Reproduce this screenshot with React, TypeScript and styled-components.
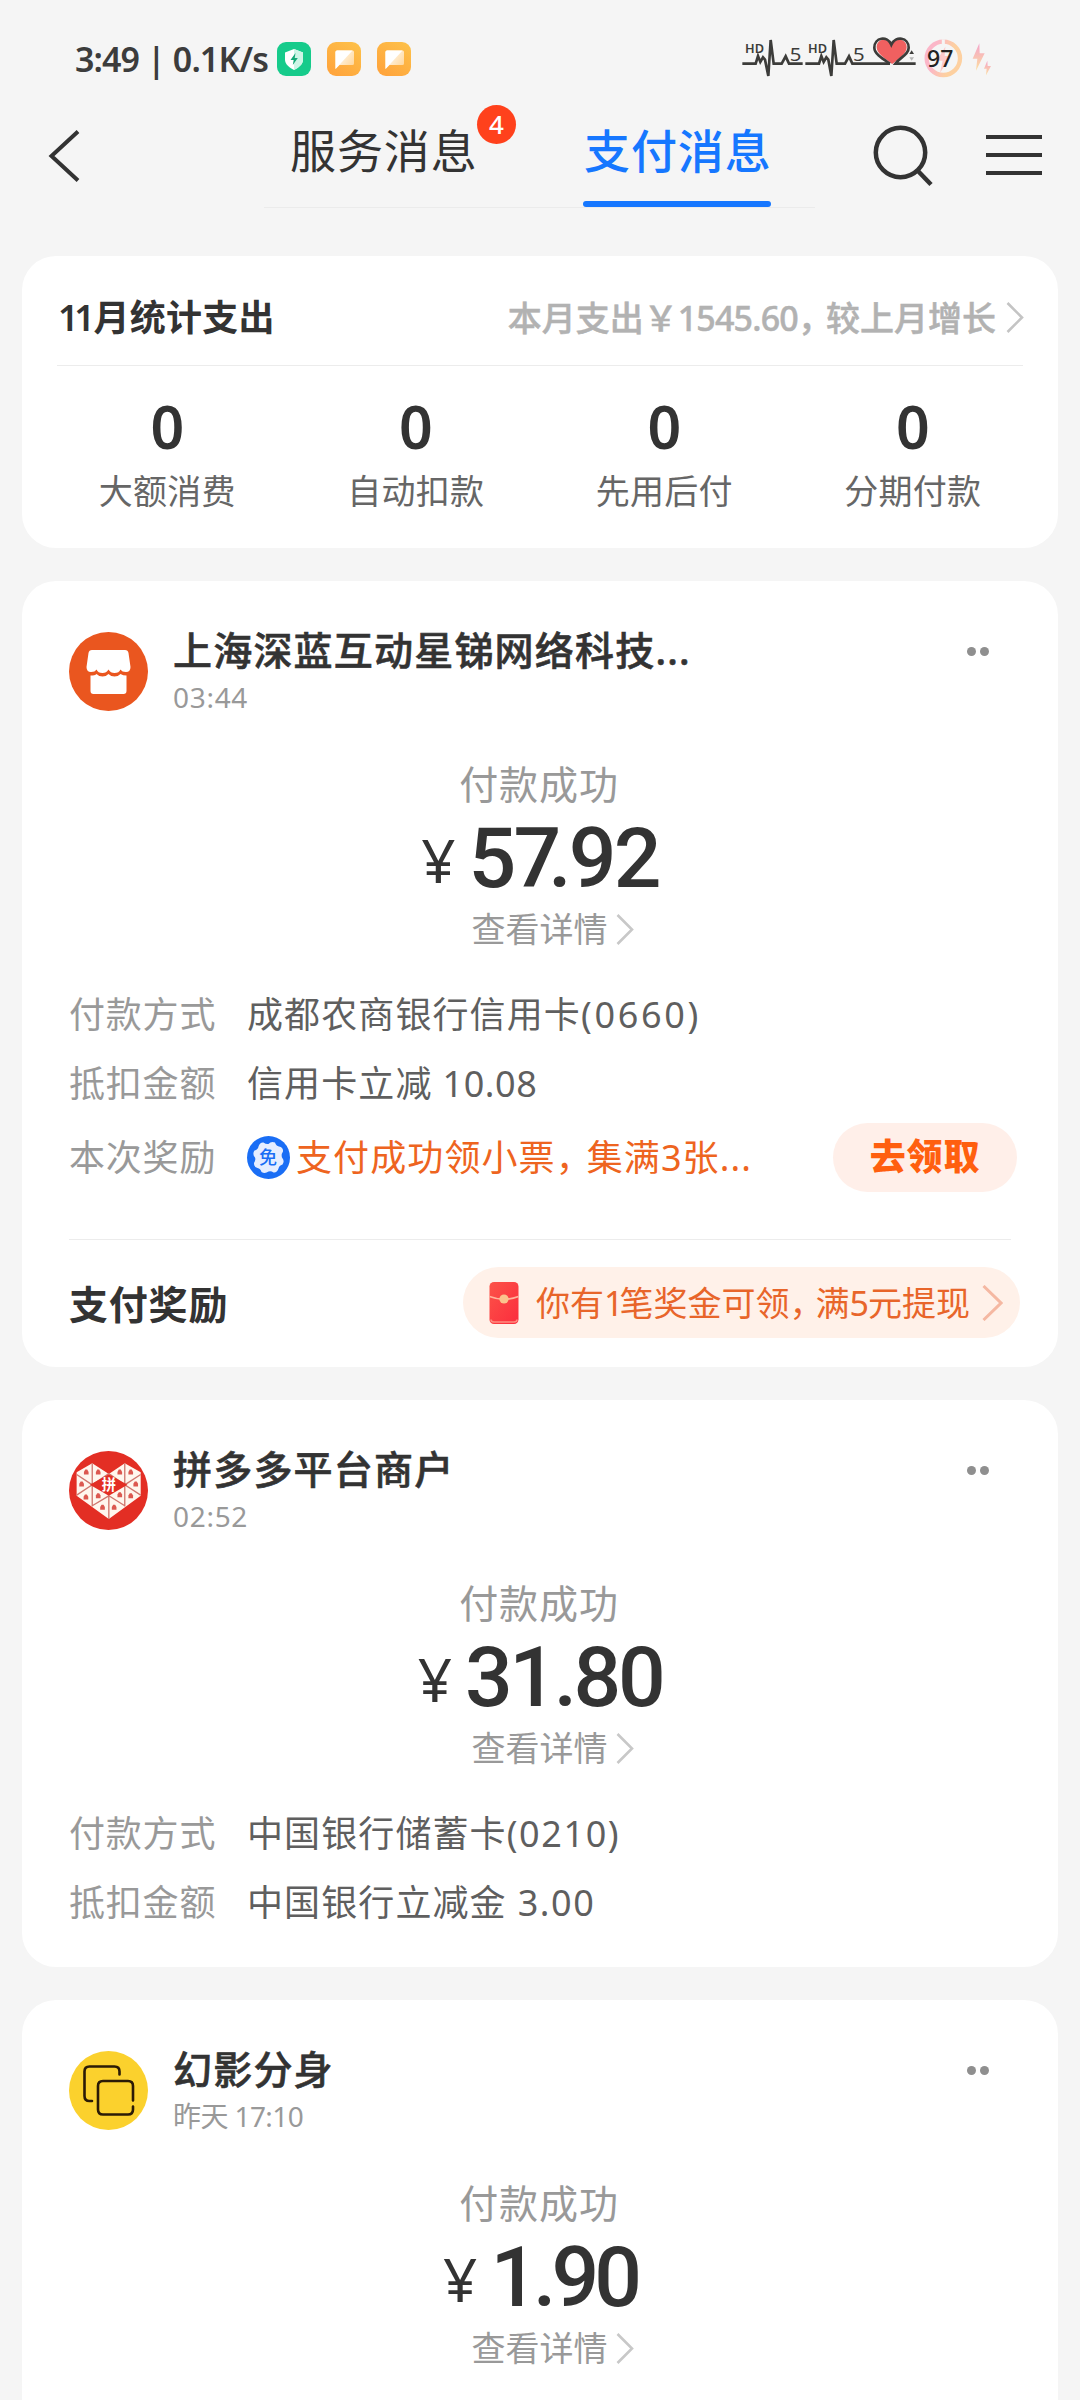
import React from "react";
import styled, { createGlobalStyle, css } from "styled-components";

const sans = `"Noto Sans", "Noto Sans CJK SC", sans-serif`;

const GlobalStyle = createGlobalStyle`
  body {
    margin: 0;
    background: #f5f5f5;
    font-family: ${sans};
    color: #333;
  }
  * { box-sizing: border-box; }
  svg { display: block; flex: none; }
`;

const Page = styled.div`
  width: 1080px;
  height: 2400px;
  overflow: hidden;
  background: #f5f5f5;
`;

/* ---------- status bar ---------- */

const StatusBar = styled.div`
  display: flex;
  align-items: center;
  height: 118px;
  padding: 0 86px 0 75px;
`;

const Clock = styled.div`
  width: 202px;
  font-size: 34px;
  font-weight: 600;
  line-height: 40px;
  letter-spacing: -0.9px;
  color: #3c3c3c;
  white-space: nowrap;
`;

const AppIcons = styled.div`
  display: flex;
  gap: 16px;
`;

const StatusRight = styled.div`
  display: flex;
  margin: 0 0 8px auto;
  height: 70px;
`;

/* ---------- navigation ---------- */

const NavBar = styled.nav`
  display: flex;
  align-items: flex-start;
  height: 90px;
  margin-bottom: 48px;
  padding-left: 46px;
`;

const NavIcon = styled.div<{ $left: number; $top: number }>`
  margin-left: ${(p) => p.$left}px;
  padding-top: ${(p) => p.$top}px;
`;

const Tabs = styled.div`
  display: flex;
  gap: 106px;
  width: 551px;
  height: 90px;
  margin-left: 182px;
  padding: 0 25px;
  border-bottom: 1px solid #ebebeb;
`;

const Tab = styled.div<{ $active?: boolean }>`
  position: relative;
  width: 188px;
  height: 89px;
  font-size: 46px;
  line-height: 64px;
  letter-spacing: 0.9px;
  white-space: nowrap;
  padding-left: 1px;
  color: #333;
  ${(p) =>
    p.$active &&
    css`
      color: #1677ff;
      font-weight: 500;
      &::after {
        content: "";
        position: absolute;
        left: 0;
        right: 0;
        bottom: 0;
        height: 6px;
        border-radius: 3px;
        background: #1677ff;
      }
    `}
`;

const Badge = styled.span`
  position: absolute;
  left: 188px;
  top: -13px;
  width: 39px;
  height: 39px;
  border-radius: 50%;
  background: #ff411c;
  color: #fff;
  font-size: 26px;
  font-weight: 500;
  line-height: 39px;
  letter-spacing: 0;
  text-align: center;
`;

/* ---------- cards ---------- */

const CardList = styled.main`
  display: flex;
  flex-direction: column;
  gap: 33px;
  padding: 0 22px;
`;

const Card = styled.section<{ $pad: number; $height: number }>`
  flex: none;
  height: ${(p) => p.$height}px;
  padding: 0 ${(p) => p.$pad}px;
  border-radius: 34px;
  background: #fff;
`;

/* Runs of digits or punctuation set tighter or looser than the text around them */
const Track = styled.span<{ $by: number }>`
  letter-spacing: ${(p) => p.$by}px;
`;

const SummaryHead = styled.div`
  display: flex;
  align-items: center;
  height: 110px;
  padding-top: 14px;
  border-bottom: 1px solid #ececec;
`;

const SummaryTitle = styled.div`
  padding-left: 1px;
  font-size: 36px;
  font-weight: 600;
  line-height: 50px;
  letter-spacing: 0.3px;
  white-space: nowrap;
`;

const Ones = styled.span`
  letter-spacing: -4.4px;
  margin-right: 3px;
`;

const SummaryLink = styled.div`
  display: flex;
  align-items: center;
  gap: 10px;
  margin: 0 -1px 0 auto;
  font-size: 34px;
  font-weight: 500;
  line-height: 50px;
  color: #b2b2b2;
  -webkit-text-stroke: 0.5px #b2b2b2;
  white-space: nowrap;
`;

const Stats = styled.div`
  display: grid;
  grid-template-columns: repeat(4, 1fr);
  margin: 0 -14px;
  padding-top: 30px;
  text-align: center;
`;

const StatValue = styled.div`
  font-size: 59px;
  font-weight: 600;
  line-height: 60px;
`;

const StatLabel = styled.div`
  margin-top: 12px;
  font-size: 34px;
  line-height: 46px;
  letter-spacing: 0.3px;
  color: #666;
`;

const MerchantRow = styled.header`
  display: flex;
  align-items: flex-start;
  height: 130px;
  padding-top: 51px;
`;

const MerchantText = styled.div`
  margin: -7px 0 0 25px;
  white-space: nowrap;
`;

const MerchantName = styled.div`
  font-size: 39px;
  font-weight: 500;
  line-height: 50px;
  letter-spacing: 1.2px;
  -webkit-text-stroke: 0.6px #333;
`;

const Time = styled.div<{ $track: number }>`
  margin-top: 4px;
  font-size: 28px;
  line-height: 36px;
  letter-spacing: ${(p) => p.$track}px;
  color: #999;
`;

const More = styled.div`
  display: flex;
  gap: 4px;
  margin: 15px 22px 0 auto;
`;

const Dot = styled.i`
  width: 9px;
  height: 9px;
  border-radius: 50%;
  background: #8f8f8f;
`;

const Payment = styled.div`
  display: flex;
  flex-direction: column;
  align-items: center;
  padding-top: 48px;
`;

const PayStatus = styled.div`
  margin-right: 2px;
  font-size: 39px;
  line-height: 50px;
  letter-spacing: 0.9px;
  color: #999;
`;

const Amount = styled.div<{ $track: number }>`
  display: flex;
  align-items: baseline;
  gap: 13px;
  height: 80px;
  margin-top: 10px;
  font-family: Roboto, sans-serif;
  font-size: 84px;
  font-weight: 500;
  line-height: 80px;
  letter-spacing: ${(p) => p.$track}px;
  font-kerning: normal;
`;

const Yen = styled.span`
  font-family: "Noto Sans", sans-serif;
  font-size: 60px;
  font-weight: 400;
  line-height: 1;
  letter-spacing: 0;
  transform: translateY(-4px);
`;

const Detail = styled.div`
  display: flex;
  align-items: center;
  gap: 8px;
  margin-top: 8px;
  padding-left: 25px;
  font-size: 34px;
  line-height: 44px;
  color: #999;
`;

const Rows = styled.div`
  display: flex;
  flex-direction: column;
  gap: 19px;
  margin-top: 39px;
`;

const Row = styled.div`
  display: flex;
  align-items: center;
  height: 50px;
  font-size: 36px;
  line-height: 50px;
  letter-spacing: 1.1px;
  white-space: pre;
  color: #5f5f5f;
`;

const RewardRow = styled(Row)`
  height: 69px;
  margin: -5px -6px 0 0;
  color: #ee6420;
`;

const Label = styled.span`
  width: 178px;
  letter-spacing: 0.8px;
  color: #999;
`;

const RewardText = styled.span`
  margin-left: 6px;
`;

const ClaimButton = styled.button`
  width: 184px;
  height: 69px;
  margin-left: auto;
  padding: 0 0 1px;
  border: 0;
  border-radius: 35px;
  background: #ffefe9;
  color: #ff5f0f;
  font: 800 36px/50px ${sans};
  letter-spacing: 0.8px;
`;

const Footer = styled.footer`
  display: flex;
  align-items: center;
  justify-content: space-between;
  height: 128px;
  margin-top: 47px;
  border-top: 1px solid #ececec;
`;

const FooterTitle = styled.div`
  font-size: 39px;
  font-weight: 600;
  line-height: 50px;
  letter-spacing: 0.8px;
`;

const BonusPill = styled.div`
  display: flex;
  align-items: center;
  width: 557px;
  height: 71px;
  margin: -2px -9px 0 0;
  padding: 0 17px 0 26px;
  border-radius: 36px;
  background: #fff1e9;
  color: #e8652a;
  font-size: 34px;
  line-height: 44px;
  white-space: nowrap;
`;

const BonusText = styled.span`
  flex: 1;
  margin-left: 17px;
`;

/* ---------- icons ---------- */

const Chevron = ({ w, h, color, stroke = 2.6 }: { w: number; h: number; color: string; stroke?: number }) => (
  <svg width={w} height={h} viewBox={`0 0 ${w} ${h}`} fill="none" stroke={color} strokeWidth={stroke}>
    <path d={`M1.5 1L${w - 2} ${h / 2}L1.5 ${h - 1}`} />
  </svg>
);

const ShieldApp = () => (
  <svg width="34" height="34" viewBox="0 0 34 34">
    <rect width="34" height="34" rx="9" fill="#16cb8b" />
    <path d="M17 7l9 3.500v7c0 4.500-4 8-9 10.500-5-2.500-9-6-9-10.500v-7z" fill="#fff" />
    <path d="M17 7l9 3.500v7c0 4.500-4 8-9 10.500z" fill="#cdf5e6" />
    <path d="M18.500 11l-5 7h3.200L15.800 23l5-7h-3.100z" fill="#13a876" />
  </svg>
);

const ChatApp = () => (
  <svg width="34" height="34" viewBox="0 0 34 34">
    <defs>
      <linearGradient id="chatBg" x1="1" y1="0" x2="0.3" y2="1">
        <stop offset="0" stopColor="#fdc24a" />
        <stop offset="1" stopColor="#ffa53c" />
      </linearGradient>
      <linearGradient id="chatFold" x1="0" y1="0" x2="1" y2="0.7">
        <stop offset="0" stopColor="#fff" />
        <stop offset="1" stopColor="#ffd9a0" />
      </linearGradient>
    </defs>
    <rect width="34" height="34" rx="9" fill="url(#chatBg)" />
    <path d="M10 8.500h15.500a1.500 1.500 0 0 1 1.500 1.500v11.500a1.500 1.500 0 0 1-1.500 1.500H12.500L8.500 27V10a1.500 1.500 0 0 1 1.500-1.500z" fill="url(#chatFold)" />
    <path d="M10 8.500H25.500L8.500 27V10a1.500 1.500 0 0 1 1.500-1.500z" fill="#fff" />
  </svg>
);

const Signals = () => (
  <svg width="264" height="70" viewBox="0 0 792 210" fill="none">
    <defs>
      <linearGradient id="ring" x1="0" y1="0.2" x2="1" y2="0.5">
        <stop offset="0.25" stopColor="#fbb6c8" />
        <stop offset="0.75" stopColor="#fdd0a0" />
      </linearGradient>
      <linearGradient id="bolt" x1="0.5" y1="0" x2="0.5" y2="1">
        <stop offset="0" stopColor="#f4a3cb" />
        <stop offset="1" stopColor="#fddf9e" />
      </linearGradient>
    </defs>
    <g stroke="#3c3c3a" strokeWidth="8">
      <path d="M37 131H77L84 108L91 126L99 112L105 119L115 168L122 60L131 131H155L167 109L177 131H218" />
      <path d="M226 131H267L274 108L281 126L289 112L295 119L304 168L311 60L320 131H345L357 109L367 131H480" />
    </g>
    <path d="M485 131C465 115 440 101 440 82C440 54 475 52 484 76C494 52 530 54 530 82C530 100 508 116 488 131Z" fill="#f06060" />
    <path d="M480 131C459 117 433 102 433 83C433 52 472 46 484 74C497 46 536 52 536 83C536 104 510 112 496 131H557" stroke="#3c3c3a" strokeWidth="8" />
    <path d="M538 102L545 91L552 102Z" fill="#3c3c3a" />
    <path d="M538 112L545 122L552 112Z" fill="#b5b5b5" />
    <g fill="#3c3c3a" fontFamily="Noto Sans">
      <text x="45" y="99" fontSize="37" fontWeight="600" textLength="57" lengthAdjust="spacingAndGlyphs">HD</text>
      <text x="234" y="99" fontSize="37" fontWeight="600" textLength="57" lengthAdjust="spacingAndGlyphs">HD</text>
      <text x="179" y="122" fontSize="56" textLength="35" lengthAdjust="spacingAndGlyphs">5</text>
      <text x="369" y="122" fontSize="56" textLength="35" lengthAdjust="spacingAndGlyphs">5</text>
    </g>
    <circle cx="640" cy="115" r="50" stroke="url(#ring)" strokeWidth="13" />
    <path d="M640 58V74" stroke="#f5f5f5" strokeWidth="9" />
    <path d="M646 80L620 122H638L630 158L664 108H644Z" fill="#fcc9c9" />
    <text x="591" y="142" fontSize="70" fontWeight="500" fill="#222" fontFamily="Noto Sans" textLength="79" lengthAdjust="spacingAndGlyphs">97</text>
    <path d="M748 70L728 116H742L738 152L764 100H749Z" fill="url(#bolt)" />
    <path d="M772 122L762 146H770L768 166L783 138H773Z" fill="url(#bolt)" />
  </svg>
);

const BackIcon = () => (
  <svg width="36" height="56" viewBox="0 0 36 56" fill="none" stroke="#333" strokeWidth="4">
    <path d="M32 3.500L5.500 28L32 52.500" />
  </svg>
);

const SearchIcon = () => (
  <svg width="64" height="64" viewBox="0 0 64 64" fill="none" stroke="#333" strokeWidth="4.5">
    <circle cx="28.500" cy="28.500" r="24.700" />
    <path d="M45.500 46.500L59 60.500" />
  </svg>
);

const MenuIcon = () => (
  <svg width="56" height="40" viewBox="0 0 56 40" stroke="#333" strokeWidth="4">
    <path d="M0 2H56M0 20H56M0 38H56" />
  </svg>
);

const StoreAvatar = () => (
  <svg width="79" height="79" viewBox="0 0 79 79">
    <circle cx="39.500" cy="39.500" r="39.500" fill="#ea561f" />
    <path d="M23 18H56Q59 18 59.500 21L61.500 35Q61.500 40 57 40Q53 40 51.500 37.500Q50 41 45.500 41Q41.500 41 39.500 37.500Q37.500 41 33.500 41Q29 41 27.500 37.500Q26 40 22 40Q17.500 40 17.500 35L19.500 21Q20 18 23 18Z" fill="#fff" />
    <path d="M21.500 43.500Q26 43.500 27.500 42Q30 44.500 33.500 44.500Q37 44.500 39.500 42Q42 44.500 45.500 44.500Q49 44.500 51.500 42Q54 43.500 57.500 43.500V59Q57.500 62 54.500 62H24.500Q21.500 62 21.500 59Z" fill="#fff" />
  </svg>
);

const tileMarks = [
  [79, 97], [115, 97], [180, 97], [213, 97], [65, 133], [228, 133],
  [78, 172], [115, 168], [180, 165], [213, 168], [128, 203], [163, 203],
];

const HeartAvatar = () => (
  <svg width="79" height="79" viewBox="27 33 238 238">
    <circle cx="146" cy="152" r="119" fill="#e32e24" />
    <path d="M50 97L97 70L147 102L195 70L243 97V168L147 238L50 168Z" fill="#fff6ee" />
    <path d="M97 70V200M195 70V200M147 168V238M50 104L97 135L50 166M243 104L195 135L243 166M97 198L147 168L195 198M97 135L147 101L195 135" stroke="#d0766e" strokeWidth="4" fill="none" />
    {tileMarks.map(([x, y]) => (
      <path key={`${x}-${y}`} d={`M${x - 7} ${y + 7}V${y - 1}L${x - 3} ${y - 8}H${x + 3}L${x + 7} ${y - 1}V${y + 7}Z`} fill="#dc5850" />
    ))}
    <path d="M90 135L147 103L203 135L147 168Z" fill="#e32e24" />
    <text x="147" y="150" fontSize="43" fontWeight="700" fill="#fff" textAnchor="middle" fontFamily="Noto Sans CJK SC">拼</text>
  </svg>
);

const CopyAvatar = () => (
  <svg width="79" height="79" viewBox="0 0 79 79" fill="none" stroke="#2b1b06" strokeWidth="2.6" strokeLinecap="round">
    <circle cx="39.500" cy="39.500" r="39.500" fill="#fbd12d" stroke="none" />
    <path d="M50.500 23.500V20.500Q50.500 15.500 45.500 15.500H20.500Q15.500 15.500 15.500 20.500V45Q15.500 50 20.500 50H23" />
    <path d="M64 49.500V35Q64 30 59 30H34Q29 30 29 35V58.500Q29 63.500 34 63.500H59Q64 63.500 64 58.500V55.500" />
  </svg>
);

const FreeBadge = () => (
  <svg width="43" height="43" viewBox="0 0 43 43">
    <circle cx="21.500" cy="21.500" r="21.500" fill="#1a6ef5" />
    <path d="M21.500 8Q24 5 28 6.500Q29 10 32 10.500Q36.500 11.500 36 15.500Q34 18.500 35 21.500Q38 25 35.500 28.500Q32 29.500 31.500 32.500Q30 37 26.500 36.500Q24 34.500 21.500 35.500Q18 38 14.500 36Q13.500 32.500 10.500 32Q6.500 30.500 7 27Q9 24 8 21.500Q5 18 7.500 14.500Q11 13.500 11.500 10.500Q13 6 16.500 6.500Q19 8.500 21.500 8Z" fill="#e6eeff" />
    <text x="21.500" y="28" fontSize="18" fontWeight="500" fill="#1a6ef5" textAnchor="middle" fontFamily="Noto Sans CJK SC">免</text>
  </svg>
);

const RedPacket = () => (
  <svg width="30" height="42" viewBox="0 0 30 42">
    <defs>
      <linearGradient id="packet" x1="0" y1="0" x2="1" y2="1">
        <stop offset="0" stopColor="#fc5348" />
        <stop offset="1" stopColor="#fb2c3d" />
      </linearGradient>
    </defs>
    <rect x="0.500" width="29" height="42" rx="4.500" fill="url(#packet)" />
    <path d="M2 37.500Q2 40 5 40H25Q28 40 28 37.500" stroke="#ff8d80" strokeWidth="1.5" fill="none" />
    <path d="M0.500 14.500Q15 20 29.500 14.500" stroke="#ffb49c" strokeWidth="1.8" fill="none" />
    <circle cx="15" cy="17" r="4.600" fill="#fbc48d" />
  </svg>
);

/* ---------- data ---------- */

const stats = ["大额消费", "自动扣款", "先用后付", "分期付款"];

type Field = { label: string; text: string; digits: string; track: number };

type Transaction = {
  name: string;
  time: string;
  timeTrack: number;
  amount: React.ReactNode;
  amountTrack: number;
  height: number;
  avatar: React.ReactNode;
  fields: Field[];
  reward?: boolean;
};

const transactions: Transaction[] = [
  {
    name: "上海深蓝互动星锑网络科技...",
    time: "03:44",
    timeTrack: 0.7,
    amount: <>5<Track $by={-13}>7</Track>.92</>,
    amountTrack: -2.8,
    height: 786,
    avatar: <StoreAvatar />,
    fields: [
      { label: "付款方式", text: "成都农商银行信用卡", digits: "(0660)", track: 2.7 },
      { label: "抵扣金额", text: "信用卡立减", digits: " 10.08", track: 0.6 },
    ],
    reward: true,
  },
  {
    name: "拼多多平台商户",
    time: "02:52",
    timeTrack: 0.7,
    amount: "31.80",
    amountTrack: -3.4,
    height: 567,
    avatar: <HeartAvatar />,
    fields: [
      { label: "付款方式", text: "中国银行储蓄卡", digits: "(0210)", track: 1.6 },
      { label: "抵扣金额", text: "中国银行立减金", digits: " 3.00", track: 1.6 },
    ],
  },
  {
    name: "幻影分身",
    time: "昨天 17:10",
    timeTrack: -0.6,
    amount: "1.90",
    amountTrack: -5,
    height: 567,
    avatar: <CopyAvatar />,
    fields: [],
  },
];

const TransactionCard = ({ t }: { t: Transaction }) => (
  <Card $pad={47} $height={t.height}>
    <MerchantRow>
      {t.avatar}
      <MerchantText>
        <MerchantName>{t.name}</MerchantName>
        <Time $track={t.timeTrack}>{t.time}</Time>
      </MerchantText>
      <More><Dot /><Dot /></More>
    </MerchantRow>
    <Payment>
      <PayStatus>付款成功</PayStatus>
      <Amount $track={t.amountTrack}>
        <Yen>¥</Yen>
        <span>{t.amount}</span>
      </Amount>
      <Detail>查看详情<Chevron w={18} h={31} color="#c8c8c8" /></Detail>
    </Payment>
    <Rows>
      {t.fields.map((f) => (
        <Row key={f.label}>
          <Label>{f.label}</Label>
          <span>{f.text}<Track $by={f.track}>{f.digits}</Track></span>
        </Row>
      ))}
      {t.reward && (
        <RewardRow>
          <Label>本次奖励</Label>
          <FreeBadge />
          <RewardText>支付成功领小票<Track $by={-5}>，</Track>集满3张...</RewardText>
          <ClaimButton>去领取</ClaimButton>
        </RewardRow>
      )}
    </Rows>
    {t.reward && (
      <Footer>
        <FooterTitle>支付奖励</FooterTitle>
        <BonusPill>
          <RedPacket />
          <BonusText>
            你有<Track $by={-4}>1</Track>笔奖金可领<Track $by={-8}>，</Track>满<Track $by={-1}>5</Track>元提现
          </BonusText>
          <Chevron w={21} h={36} color="#f5b8a2" stroke={3} />
        </BonusPill>
      </Footer>
    )}
  </Card>
);

export default function App() {
  return (
    <Page>
      <GlobalStyle />
      <StatusBar>
        <Clock>3:49 | 0.1K/s</Clock>
        <AppIcons><ShieldApp /><ChatApp /><ChatApp /></AppIcons>
        <StatusRight><Signals /></StatusRight>
      </StatusBar>
      <NavBar>
        <NavIcon $left={0} $top={10}><BackIcon /></NavIcon>
        <Tabs>
          <Tab>服务消息<Badge>4</Badge></Tab>
          <Tab $active>支付消息</Tab>
        </Tabs>
        <NavIcon $left={57} $top={6}><SearchIcon /></NavIcon>
        <NavIcon $left={50} $top={17}><MenuIcon /></NavIcon>
      </NavBar>
      <CardList>
        <Card $pad={35} $height={292}>
          <SummaryHead>
            <SummaryTitle><Ones>11</Ones>月统计支出</SummaryTitle>
            <SummaryLink>
              <span>
                本月支出￥<Track $by={-0.8}>1545.60</Track><Track $by={-6}>，</Track>较上月增长
              </span>
              <Chevron w={18} h={31} color="#c4c4c4" />
            </SummaryLink>
          </SummaryHead>
          <Stats>
            {stats.map((s) => (
              <div key={s}><StatValue>0</StatValue><StatLabel>{s}</StatLabel></div>
            ))}
          </Stats>
        </Card>
        {transactions.map((t) => <TransactionCard key={t.name} t={t} />)}
      </CardList>
    </Page>
  );
}
